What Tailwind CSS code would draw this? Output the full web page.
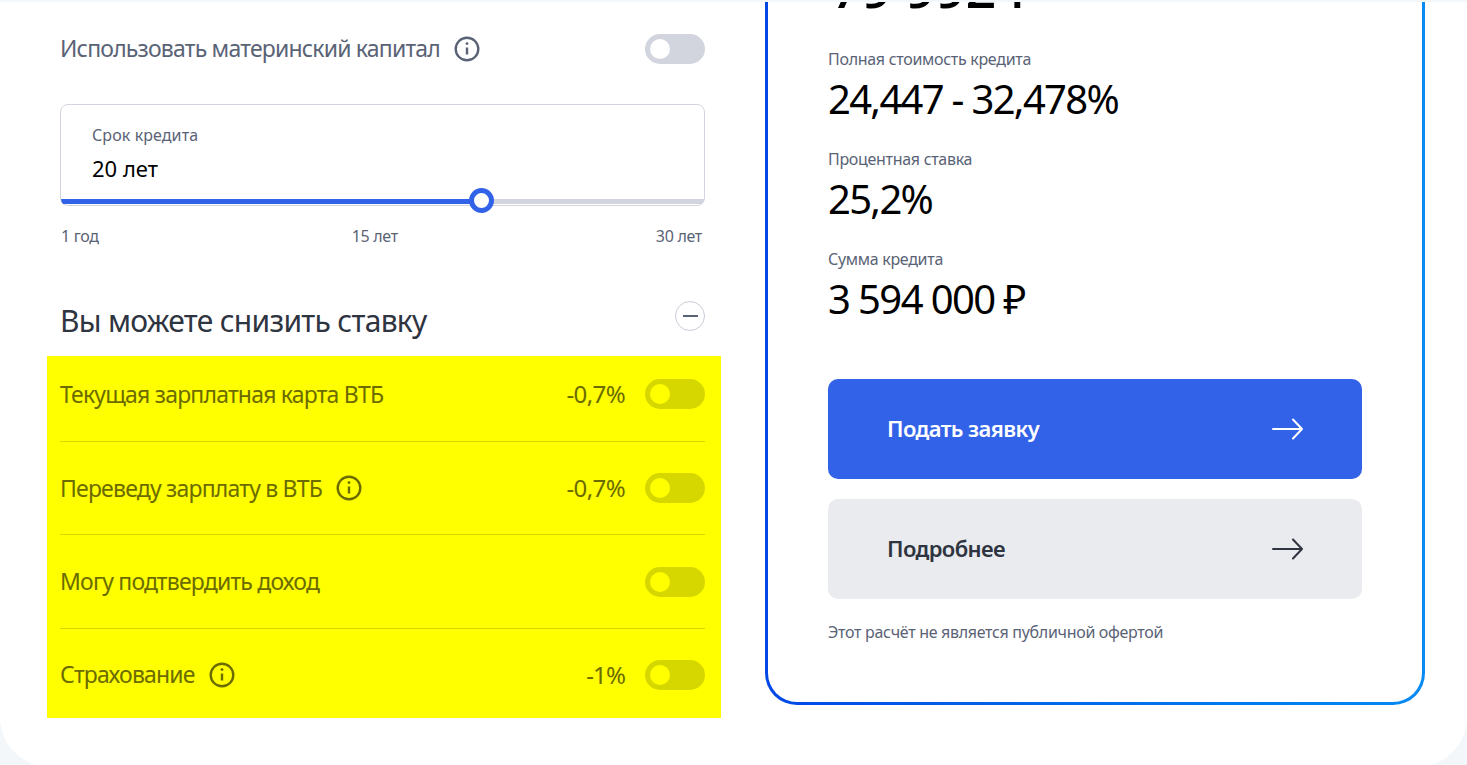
<!DOCTYPE html>
<html lang="ru">
<head>
  <meta charset="UTF-8">
  <title>Ипотека</title>
  <script src="https://cdn.jsdelivr.net/npm/@tailwindcss/browser@4"></script>
</head>
<body class="h-[765px] overflow-hidden bg-[#f4f7fa] font-['Noto_Sans',sans-serif] text-[#5a6376]">

<main class="h-[765px] mt-[2px] bg-white rounded-b-[50px] overflow-hidden flex pl-[60px] pr-[42px] gap-[60px]">

  <!-- left column -->
  <section class="w-[645px] shrink-0">
    <div class="h-[92px] mt-[1px] flex items-center justify-between pb-[1px]">
      <div class="flex items-center gap-[14px] text-[23px] tracking-[-0.8px]">
        <span>Использовать материнский капитал</span>
        <svg class="w-[26px] h-[26px]" viewBox="0 0 26 26" fill="none" stroke="currentColor" stroke-width="2.4"><circle cx="13" cy="13" r="11.3"/><path d="M13 11.5v7"/><circle cx="13" cy="7.6" r="1.4" fill="currentColor" stroke="none"/></svg>
      </div>
      <div class="w-[60px] h-[30px] rounded-full bg-[#d3d5de] p-[5px]"><div class="w-[20px] h-[20px] rounded-full bg-white"></div></div>
    </div>

    <div class="relative h-[102px] mt-[9px] border border-[#d3d5de] rounded-[8px] pl-[31px] pt-[20px]">
      <div class="text-[16px] leading-[20px] tracking-[0.1px]">Срок кредита</div>
      <div class="mt-[8px] text-[22px] leading-[30px] text-black">20 лет</div>
      <div class="absolute left-0 right-0 -bottom-[1px] h-[7px] overflow-hidden rounded-b-[8px]">
        <div class="flex h-[5px]">
          <div class="w-[421px] bg-[#3262e8]"></div>
          <div class="flex-1 bg-[#d3d5de]"></div>
        </div>
      </div>
      <div class="absolute left-[408px] top-[83px] w-[25px] h-[25px] rounded-full border-[5px] border-[#3262e8] bg-white"></div>
    </div>

    <div class="flex justify-between mt-[18px] pl-[1px] pr-[3px] text-[16px] leading-[24px] tracking-[-0.3px]">
      <span>1 год</span><span class="-ml-[5px]">15 лет</span><span>30 лет</span>
    </div>

    <div class="flex items-start justify-between mt-[54px]">
      <h2 class="text-[30px] leading-[38px] tracking-[-0.7px] text-[#2f3441]">Вы можете снизить ставку</h2>
      <div class="w-[30px] h-[30px] -mt-[1px] rounded-full border border-[#c9ccd6] flex items-center justify-center"><div class="w-[15px] h-[2px] bg-[#5a6376]"></div></div>
    </div>

    <!-- highlighted options -->
    <div class="mt-[16px] -ml-[13px] -mr-[16px] pl-[13px] pr-[16px] h-[362px] bg-[#ffff00] text-[#6b6b00]">
      <div class="h-[86px] pb-[9px] flex items-center justify-between border-b border-[#d7d700]">
        <span class="text-[23px] tracking-[-0.8px]">Текущая зарплатная карта ВТБ</span>
        <div class="flex items-center gap-[20px]">
          <span class="text-[24px] tracking-[-0.6px]">-0,7%</span>
          <div class="w-[60px] h-[30px] rounded-full bg-[#d7d700] p-[5px]"><div class="w-[20px] h-[20px] rounded-full bg-[#ffff00]"></div></div>
        </div>
      </div>
      <div class="h-[93px] flex items-center justify-between border-b border-[#d7d700]">
        <div class="flex items-center gap-[14px] text-[23px] tracking-[-0.8px]">
          <span>Переведу зарплату в ВТБ</span>
          <svg class="w-[26px] h-[26px]" viewBox="0 0 26 26" fill="none" stroke="currentColor" stroke-width="2.4"><circle cx="13" cy="13" r="11.3"/><path d="M13 11.5v7"/><circle cx="13" cy="7.6" r="1.4" fill="currentColor" stroke="none"/></svg>
        </div>
        <div class="flex items-center gap-[20px]">
          <span class="text-[24px] tracking-[-0.6px]">-0,7%</span>
          <div class="w-[60px] h-[30px] rounded-full bg-[#d7d700] p-[5px]"><div class="w-[20px] h-[20px] rounded-full bg-[#ffff00]"></div></div>
        </div>
      </div>
      <div class="h-[94px] flex items-center justify-between border-b border-[#d7d700]">
        <span class="text-[23px] tracking-[-0.8px]">Могу подтвердить доход</span>
        <div class="w-[60px] h-[30px] rounded-full bg-[#d7d700] p-[5px]"><div class="w-[20px] h-[20px] rounded-full bg-[#ffff00]"></div></div>
      </div>
      <div class="h-[89px] pt-[2px] flex items-center justify-between">
        <div class="flex items-center gap-[14px] text-[23px] tracking-[-0.8px]">
          <span>Страхование</span>
          <svg class="w-[26px] h-[26px]" viewBox="0 0 26 26" fill="none" stroke="currentColor" stroke-width="2.4"><circle cx="13" cy="13" r="11.3"/><path d="M13 11.5v7"/><circle cx="13" cy="7.6" r="1.4" fill="currentColor" stroke="none"/></svg>
        </div>
        <div class="flex items-center gap-[20px]">
          <span class="text-[24px] tracking-[-0.9px]">-1%</span>
          <div class="w-[60px] h-[30px] rounded-full bg-[#d7d700] p-[5px]"><div class="w-[20px] h-[20px] rounded-full bg-[#ffff00]"></div></div>
        </div>
      </div>
    </div>
  </section>

  <!-- result card, scrolled past its top edge -->
  <aside class="w-[660px] h-[703px] shrink-0 rounded-b-[32px] px-[3px] pb-[3px] bg-linear-to-r from-[#0047e6] to-[#0a8bf2]">
    <div class="h-[700px] bg-white rounded-b-[29px] px-[60px] overflow-hidden">
      <div class="h-[14px] -mt-[37px] ml-[3px] text-[54px] leading-[44px] font-medium tracking-[-0.6px] text-black">79 992 ₽</div>
      <div class="mt-[70px] text-[16px] leading-[20px] tracking-[-0.3px]">Полная стоимость кредита</div>
      <div class="mt-[5px] text-[40px] leading-[50px] tracking-[-1.7px] text-black">24,447 - 32,478%</div>
      <div class="mt-[25px] text-[16px] leading-[20px] tracking-[-0.3px]">Процентная ставка</div>
      <div class="mt-[5px] text-[40px] leading-[50px] tracking-[-1.7px] text-black">25,2%</div>
      <div class="mt-[25px] text-[16px] leading-[20px] tracking-[-0.3px]">Сумма кредита</div>
      <div class="mt-[5px] text-[40px] leading-[50px] tracking-[-1.6px] text-black">3 594 000 ₽</div>

      <a class="mt-[55px] h-[100px] rounded-[10px] bg-[#3262e8] flex items-center justify-between pl-[60px] pr-[59px] text-white">
        <span class="-ml-[1px] mb-[2px] text-[22px] font-semibold tracking-[-0.6px]">Подать заявку</span>
        <svg class="w-[32px] h-[24px]" viewBox="0 0 32 24" fill="none" stroke="currentColor" stroke-width="2" stroke-linecap="round" stroke-linejoin="round"><path d="M2 12h29M22 2.5l9 9.5-9 9.5"/></svg>
      </a>
      <a class="mt-[20px] h-[100px] rounded-[10px] bg-[#e9ebee] flex items-center justify-between pl-[60px] pr-[59px] text-[#2f3441]">
        <span class="-ml-[1px] mb-[2px] text-[22px] font-semibold tracking-[-0.6px]">Подробнее</span>
        <svg class="w-[32px] h-[24px]" viewBox="0 0 32 24" fill="none" stroke="currentColor" stroke-width="2" stroke-linecap="round" stroke-linejoin="round"><path d="M2 12h29M22 2.5l9 9.5-9 9.5"/></svg>
      </a>
      <p class="mt-[23px] text-[16px] leading-[20px] tracking-[-0.3px]">Этот расчёт не является публичной офертой</p>
    </div>
  </aside>
</main>
</body>
</html>
